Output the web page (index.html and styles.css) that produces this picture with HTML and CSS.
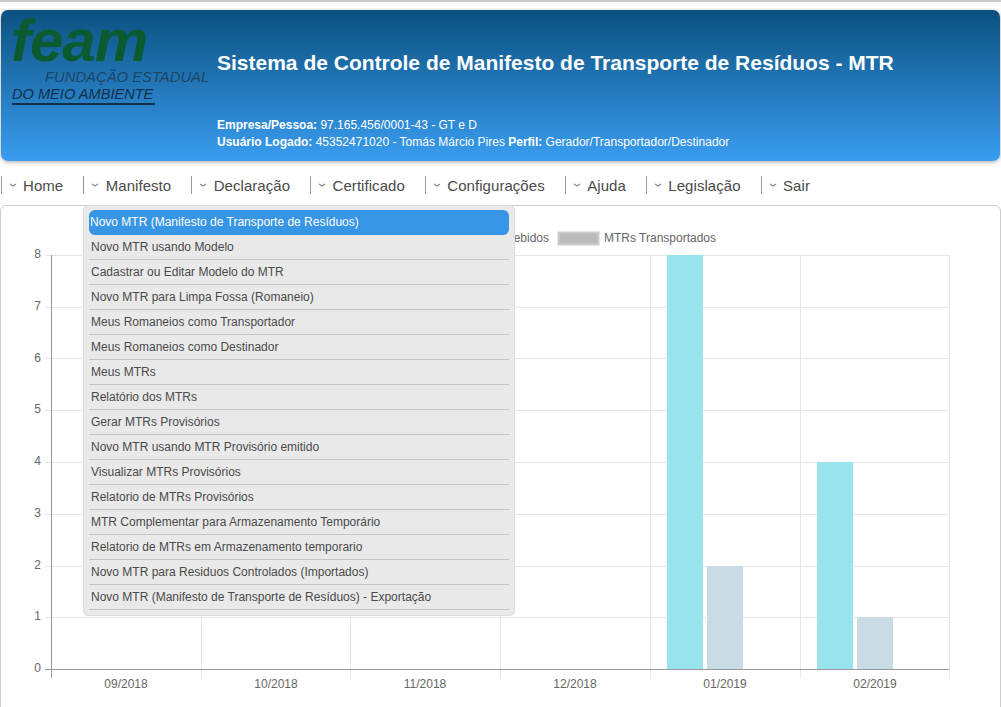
FILE: index.html
```html
<!DOCTYPE html>
<html lang="pt-BR">
<head>
    <meta charset="UTF-8">
    <meta name="viewport" content="width=device-width, initial-scale=1.0">
    <title>Sistema MTR</title>
    <link rel="stylesheet" href="styles.css">
</head>
<body>
    <div class="topline"></div>

    <!-- Cabecalho -->
    <div class="header">
        <div class="logo">
            <div class="logo-name">feam</div>
            <div class="logo-line1">FUNDAÇÃO ESTADUAL</div>
            <div class="logo-line2">DO MEIO AMBIENTE</div>
        </div>
        <div class="header-info">
            <h1>Sistema de Controle de Manifesto de Transporte de Resíduos - MTR</h1>
            <p><b>Empresa/Pessoa:</b> 97.165.456/0001-43 - GT e D</p>
            <p><b>Usuário Logado:</b> 45352471020 - Tomás Márcio Pires <b>Perfil:</b> Gerador/Transportador/Destinador</p>
        </div>
    </div>

    <!-- Menu principal -->
    <ul class="nav">
        <li class="nav-item"><svg class="chev" viewBox="0 0 8 4"><path d="M1 1 L4 3 L7 1"/></svg>Home</li>
        <li class="nav-item"><svg class="chev" viewBox="0 0 8 4"><path d="M1 1 L4 3 L7 1"/></svg>Manifesto</li>
        <li class="nav-item"><svg class="chev" viewBox="0 0 8 4"><path d="M1 1 L4 3 L7 1"/></svg>Declaração</li>
        <li class="nav-item"><svg class="chev" viewBox="0 0 8 4"><path d="M1 1 L4 3 L7 1"/></svg>Certificado</li>
        <li class="nav-item"><svg class="chev" viewBox="0 0 8 4"><path d="M1 1 L4 3 L7 1"/></svg>Configurações</li>
        <li class="nav-item"><svg class="chev" viewBox="0 0 8 4"><path d="M1 1 L4 3 L7 1"/></svg>Ajuda</li>
        <li class="nav-item"><svg class="chev" viewBox="0 0 8 4"><path d="M1 1 L4 3 L7 1"/></svg>Legislação</li>
        <li class="nav-item"><svg class="chev" viewBox="0 0 8 4"><path d="M1 1 L4 3 L7 1"/></svg>Sair</li>
    </ul>

    <!-- Grafico -->
    <div class="card">
        <svg class="chart" width="999" height="520" viewBox="1 206 999 520">
            <g class="grid">
                <path d="M45 255.5H949M45 307.5H949M45 358.5H949M45 410.5H949M45 462.5H949M45 514.5H949M45 566.5H949M45 617.5H949"/>
                <path d="M201.5 255V678M350.5 255V678M500.5 255V678M650.5 255V678M800.5 255V678M949.5 255V678"/>
            </g>
            <path class="axis" d="M51.5 255V678M45 669.5H949"/>
            <rect class="bar-a" x="667" y="255" width="36" height="414"/>
            <rect class="bar-b" x="707" y="566" width="36" height="103"/>
            <rect class="bar-a" x="817" y="462" width="36" height="207"/>
            <rect class="bar-b" x="857" y="617" width="36" height="52"/>
            <rect class="swatch" x="558.5" y="232.5" width="40" height="12"/>
            <g class="labels">
                <text x="549" y="242" text-anchor="end">MTRs Recebidos</text>
                <text x="604" y="242">MTRs Transportados</text>
                <text x="41" y="258" text-anchor="end">8</text>
                <text x="41" y="310" text-anchor="end">7</text>
                <text x="41" y="362" text-anchor="end">6</text>
                <text x="41" y="413" text-anchor="end">5</text>
                <text x="41" y="465" text-anchor="end">4</text>
                <text x="41" y="517" text-anchor="end">3</text>
                <text x="41" y="569" text-anchor="end">2</text>
                <text x="41" y="620" text-anchor="end">1</text>
                <text x="41" y="672" text-anchor="end">0</text>
                <text x="126" y="688" text-anchor="middle">09/2018</text>
                <text x="276" y="688" text-anchor="middle">10/2018</text>
                <text x="425" y="688" text-anchor="middle">11/2018</text>
                <text x="575" y="688" text-anchor="middle">12/2018</text>
                <text x="725" y="688" text-anchor="middle">01/2019</text>
                <text x="875" y="688" text-anchor="middle">02/2019</text>
            </g>
        </svg>
    </div>

    <!-- Submenu aberto de Manifesto -->
    <ul class="submenu">
        <li class="active">Novo MTR (Manifesto de Transporte de Resíduos)</li>
        <li>Novo MTR usando Modelo</li>
        <li>Cadastrar ou Editar Modelo do MTR</li>
        <li>Novo MTR para Limpa Fossa (Romaneio)</li>
        <li>Meus Romaneios como Transportador</li>
        <li>Meus Romaneios como Destinador</li>
        <li>Meus MTRs</li>
        <li>Relatório dos MTRs</li>
        <li>Gerar MTRs Provisórios</li>
        <li>Novo MTR usando MTR Provisório emitido</li>
        <li>Visualizar MTRs Provisórios</li>
        <li>Relatorio de MTRs Provisórios</li>
        <li>MTR Complementar para Armazenamento Temporário</li>
        <li>Relatorio de MTRs em Armazenamento temporario</li>
        <li>Novo MTR para Residuos Controlados (Importados)</li>
        <li>Novo MTR (Manifesto de Transporte de Resíduos) - Exportação</li>
    </ul>
</body>
</html>
```

FILE: styles.css
```css
html {
    height: 707px;
    overflow: hidden;
}
body {
    font-family: "Liberation Sans", Arial, sans-serif;
    margin: 0;
    padding: 0;
    background-color: #fff;
    color: #333;
}
.topline {
    height: 2px;
    background-color: #ccc;
    margin-bottom: 8px;
}

.header {
    display: flex;
    height: 151px;
    margin: 0 1px;
    border-radius: 7px;
    background: linear-gradient(to bottom, #0b5180, #3a9df0);
    box-shadow: 0 1px 4px rgba(0, 0, 0, 0.35);
}
.logo {
    width: 206px;
    padding: 4px 0 0 10px;
    flex-shrink: 0;
    font-style: italic;
    color: #1c4566;
}
.logo-name {
    font-size: 60px;
    line-height: 54px;
    font-weight: bold;
    color: #0b5a30;
    letter-spacing: -1px;
}
.logo-line1 {
    font-size: 14.8px;
    line-height: 18px;
    margin-left: 34px;
    white-space: nowrap;
}
.logo-line2 {
    font-size: 14.6px;
    line-height: 17px;
    width: 143px;
    margin-left: 1px;
    white-space: nowrap;
    color: #123049;
    border-bottom: 2px solid #12304a;
}
.header-info {
    padding-top: 40px;
    color: #fff;
    font-size: 12px;
}
.header-info h1 {
    font-size: 21px;
    line-height: 25px;
    margin: 0 0 42px 0;
    white-space: nowrap;
}
.header-info p {
    margin: 0;
    line-height: 17px;
    white-space: nowrap;
}

.nav {
    display: flex;
    list-style: none;
    margin: 15px 0 0 0;
    padding: 0 0 0 0.5px;
    height: 29px;
}
.nav-item {
    display: flex;
    align-items: center;
    height: 18px;
    padding: 0 20px 0 7px;
    border-left: 1px solid #999;
    font-size: 15px;
    letter-spacing: 0.05px;
    color: #4a4a4a;
    white-space: nowrap;
}
.chev {
    width: 8px;
    height: 4px;
    margin-right: 6.5px;
    fill: none;
    stroke: #888;
    stroke-width: 1.2;
}

.card {
    height: 520px;
    border: 1px solid #ccc;
    border-radius: 6px;
    background-color: #fff;
    overflow: hidden;
}
.chart {
    display: block;
}
.grid path {
    fill: none;
    stroke: #e6e6e6;
    stroke-width: 1;
}
.axis {
    fill: none;
    stroke: #999;
    stroke-width: 1;
}
.bar-a {
    fill: #99e3ef;
}
.bar-b {
    fill: #c9dbe5;
}
.swatch {
    fill: #bbb;
    stroke: #ccc;
    stroke-width: 2;
}
.labels text {
    font-family: "Liberation Sans", Arial, sans-serif;
    font-size: 12px;
    fill: #666;
}

.submenu {
    position: absolute;
    left: 83px;
    top: 205px;
    width: 420px;
    height: 394px;
    margin: 0;
    padding: 4px 5px 11px 5px;
    list-style: none;
    background-color: #e9e9e9;
    border: 1px solid #ddd;
    border-radius: 5px;
    font-size: 12px;
    color: #4a4a4a;
}
.submenu li {
    height: 24px;
    line-height: 24px;
    padding-left: 2px;
    border-bottom: 1px solid #c4c4c4;
    white-space: nowrap;
}
.submenu li.active {
    padding-left: 1px;
    background-color: #3795e6;
    color: #fff;
    border-radius: 6px;
    border-bottom: 1px solid #3795e6;
}
```
